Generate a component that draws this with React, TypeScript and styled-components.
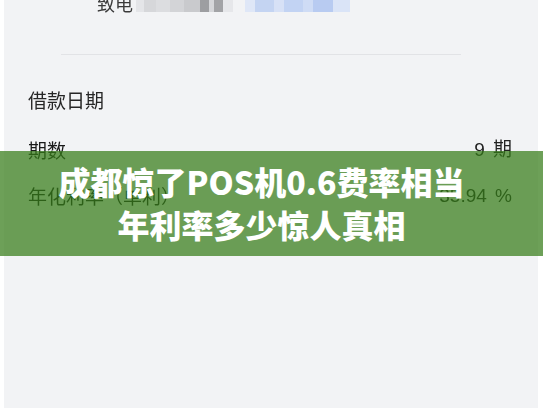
import React from "react";
import styled, { createGlobalStyle } from "styled-components";

const GlobalStyle = createGlobalStyle`
  html, body {
    margin: 0;
    padding: 0;
    background: #ffffff;
  }
  body {
    font-family: "Noto Sans CJK SC", "Noto Sans", sans-serif;
  }
`;

const Page = styled.div`
  position: relative;
  width: 543px;
  height: 408px;
  overflow: hidden;
  background: #ffffff;
`;

const Screen = styled.div`
  margin: 0 5px 0 4px;
  height: 100%;
  background: #f2f3f5;
  display: flex;
  flex-direction: column;
  filter: blur(0.4px);
`;

const ContactRow = styled.div`
  display: flex;
  align-items: center;
  margin-top: -7px;
  padding-left: 93px;
  height: 20px;
`;

const ContactLabel = styled.span`
  font-size: 18px;
  line-height: 20px;
  color: #3a3a3a;
  margin-right: 3px;
`;

const Mosaic = styled.div<{ $gap?: number }>`
  display: flex;
  margin-top: 4px;
  margin-left: ${(p) => p.$gap ?? 0}px;
`;

const Tile = styled.span<{ $c: string; $w: number }>`
  display: block;
  width: ${(p) => p.$w}px;
  height: 14px;
  background: ${(p) => p.$c};
`;

const Divider = styled.div`
  margin: 41px 0 0 57px;
  width: 400px;
  height: 1px;
  background: #e2e3e6;
`;

const SectionTitle = styled.div`
  margin: 32px 0 0 24px;
  font-size: 19px;
  line-height: 26px;
  color: #262626;
`;

const InfoRow = styled.div<{ $top: number }>`
  display: flex;
  justify-content: space-between;
  align-items: center;
  margin-top: ${(p) => p.$top}px;
  padding: 0 26px 0 24px;
  font-size: 19px;
  line-height: 26px;
`;

const InfoLabel = styled.span`
  color: #1a1a1a;
`;

const InfoValue = styled.span`
  font-family: "Liberation Sans", "Noto Sans CJK SC", sans-serif;
  color: #222222;
  word-spacing: 3px;
`;

const Banner = styled.div`
  position: absolute;
  left: 0;
  right: 0;
  top: 151px;
  height: 105px;
  box-sizing: border-box;
  padding: 9px 20px 0 0;
  background: rgba(52, 124, 24, 0.72);
  display: flex;
  flex-direction: column;
  align-items: center;
`;

const BannerLine = styled.div`
  font-family: "Noto Sans CJK SC", "Noto Sans", sans-serif;
  font-weight: 900;
  font-size: 32px;
  line-height: 43px;
  color: #ffffff;
  white-space: nowrap;
`;

const grayTiles: [string, number][] = [
  ["#e4e5e8", 8],
  ["#d6d7da", 12],
  ["#dcdde0", 14],
  ["#d3d4d7", 14],
  ["#c9cacd", 16],
  ["#9d9ea1", 9],
  ["#d5d6d9", 5],
  ["#a2a3a6", 9],
  ["#e6e7ea", 10],
];

const blueTiles: [string, number][] = [
  ["#dfe7f7", 10],
  ["#c4d4f2", 19],
  ["#d7e1f6", 10],
  ["#c2d3f3", 19],
  ["#cfdcf5", 10],
  ["#b8cbf1", 20],
  ["#dae4f7", 17],
];

export default function App() {
  return (
    <>
      <GlobalStyle />
      <Page>
        <Screen>
          <ContactRow>
            <ContactLabel>致电</ContactLabel>
            <Mosaic>
              {grayTiles.map(([c, w], i) => (
                <Tile key={i} $c={c} $w={w} />
              ))}
            </Mosaic>
            <Mosaic $gap={12}>
              {blueTiles.map(([c, w], i) => (
                <Tile key={i} $c={c} $w={w} />
              ))}
            </Mosaic>
          </ContactRow>
          <Divider />
          <SectionTitle>借款日期</SectionTitle>
          <InfoRow $top={24}>
            <InfoLabel>期数</InfoLabel>
            <InfoValue>9 期</InfoValue>
          </InfoRow>
          <InfoRow $top={20}>
            <InfoLabel>年化利率（单利）</InfoLabel>
            <InfoValue>35.94 %</InfoValue>
          </InfoRow>
        </Screen>
        <Banner>
          <BannerLine>成都惊了POS机0.6费率相当</BannerLine>
          <BannerLine>年利率多少惊人真相</BannerLine>
        </Banner>
      </Page>
    </>
  );
}
